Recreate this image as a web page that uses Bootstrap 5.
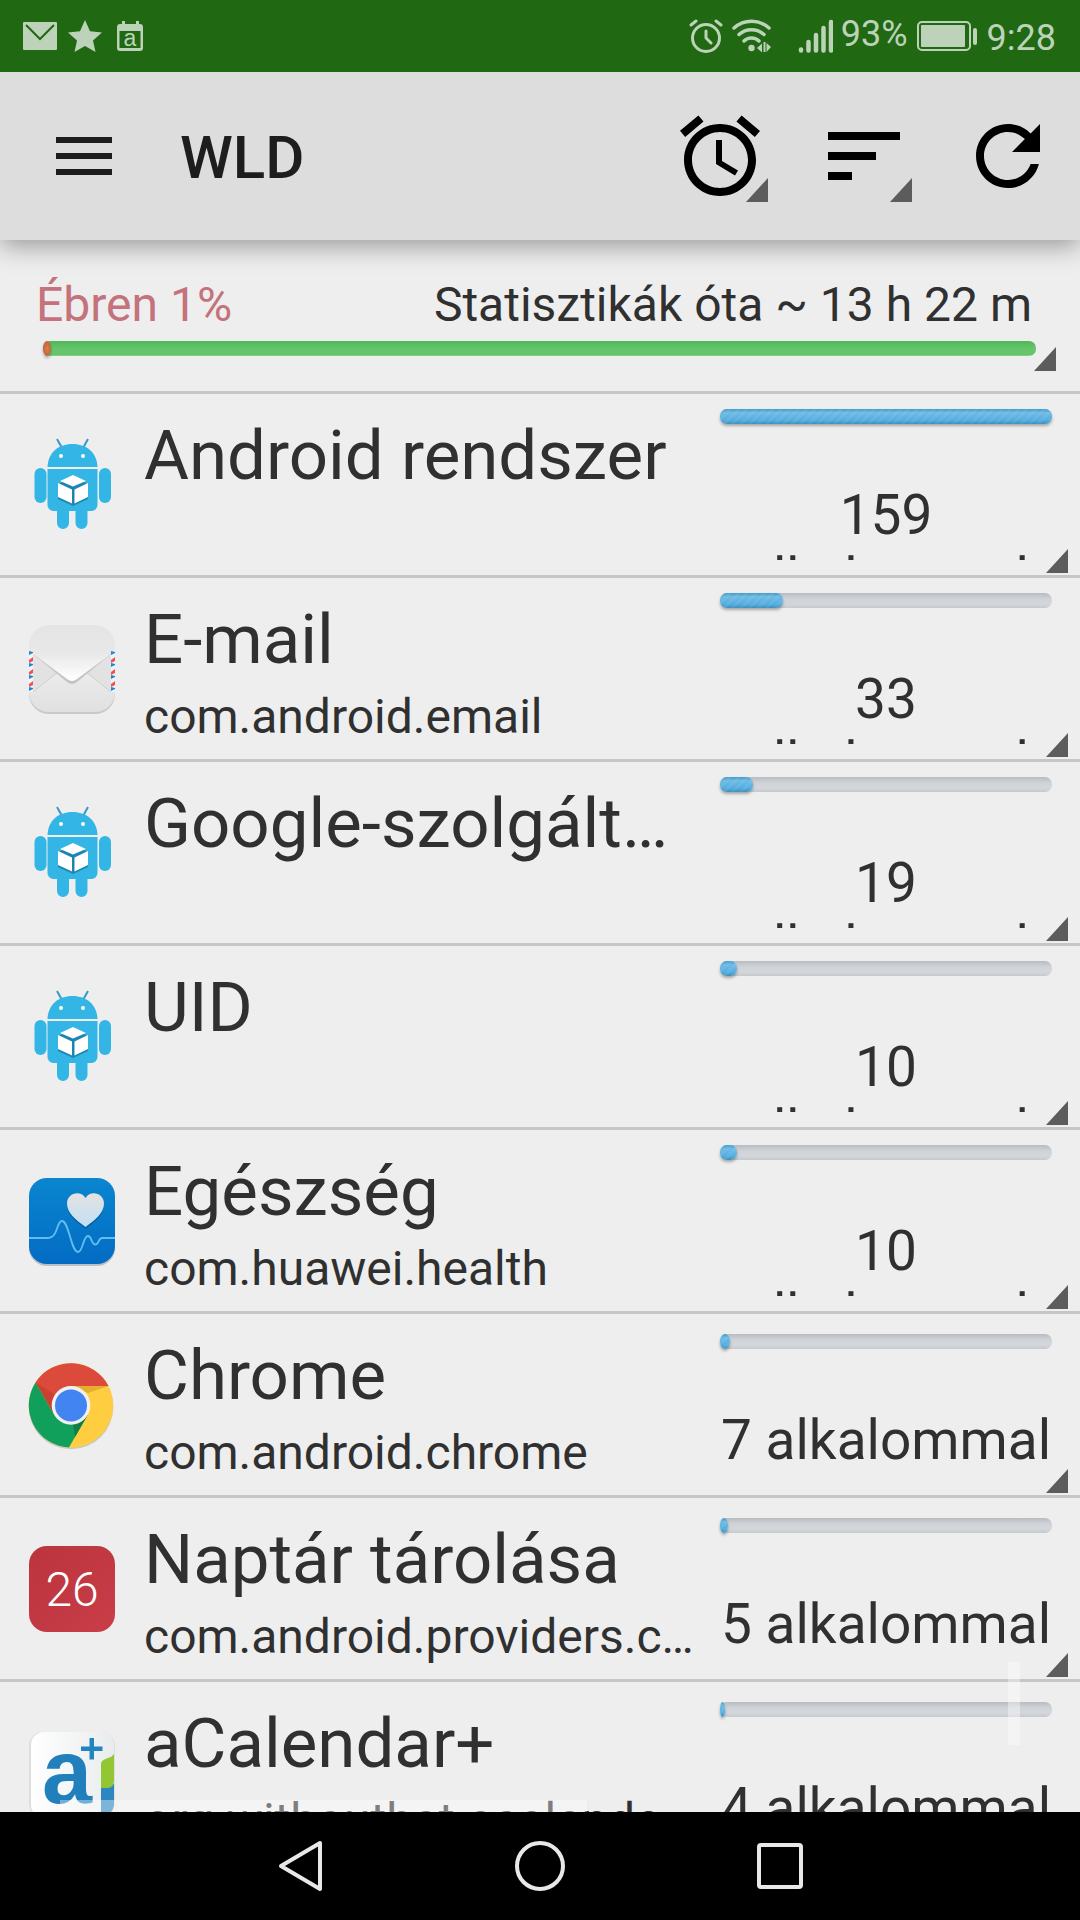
<!DOCTYPE html>
<html lang="hu">
<head>
<meta charset="utf-8">
<meta name="viewport" content="width=device-width, initial-scale=1">
<title>WLD</title>
<link href="https://cdn.jsdelivr.net/npm/bootstrap@5.3.0/dist/css/bootstrap.min.css" rel="stylesheet">
<style>
  body { font-family: Roboto, "Noto Sans", sans-serif; color: #303030; background: #eee; }
  svg { display: block; flex: none; }
  .status-strip { height: 72px; padding: 0 24px 0 22px; background: #206811; color: #bcd2b9; font-size: 36px; line-height: 42px; z-index: 3; }
  .app-toolbar { height: 168px; background: #ddd; color: #000; box-shadow: 0 6px 24px rgba(0,0,0,.36); z-index: 2; }
  .app-toolbar h1 { padding-top: 4px; font-size: 60px; font-weight: 500; line-height: 72px; color: #1d1d1d; }
  .tool-btn { width: 144px; height: 168px; }
  .menu-btn { padding-left: 56px; width: 180px; }
  .corner { position: absolute; right: 12px; bottom: 2px; }
  .tool-btn .corner { right: 24px; bottom: 38px; }
  .summary { height: 154px; padding: 37px 48px 0 36px; border-bottom: 3px solid #c6c6c6; font-size: 48px; line-height: 56px; }
  .summary .corner { right: 24px; bottom: 20px; }
  .awake { color: #c4727b; }
  .meter, .meter-green { height: 15px; border-radius: 7px; overflow: visible; }
  .meter { background: linear-gradient(#b9bdc1, #d0d4d8 40%, #d3d7db 75%, #c6cacd); }
  .meter .progress-bar { border-radius: min(50%, 7px) / 7px; background: repeating-linear-gradient(135deg, rgba(255,255,255,.06) 0 3px, transparent 3px 6px), linear-gradient(#3f9cc9, #6fbbe3 25%, #55ade0 75%, #3b8fba); box-shadow: 0 2px 3px rgba(0,0,0,.3); }
  .meter-green { margin: 8px -4px 0 7px; background: linear-gradient(#50b856, #66c56c 50%, #66c56c 90%, #8fd494); }
  .meter-green .progress-bar { border-radius: 50%; background: radial-gradient(#e57a45, #a9603a); box-shadow: 0 2px 3px rgba(0,0,0,.3); }
  .list-group-flush > .app-row { height: 184px; padding: 0 28px 0 24px; border: 0; border-bottom: 3px solid #c6c6c6; background: none; color: inherit; gap: 24px; }
  .app-icon { width: 96px; height: 96px; }
  .app-title { font-size: 69px; line-height: 80px; }
  .app-pkg { margin-top: 9px; font-size: 48px; line-height: 56px; }
  .app-names { padding-top: 22px; }
  .app-usage { width: 332px; flex: none; padding-top: 20px; font-size: 55px; line-height: 63px; }
  .app-usage.wrapped { padding-top: 15px; }
  .usage-text { margin-top: 60px; height: 76px; overflow: hidden; }
  .thumb-v, .thumb-h { position: absolute; background: rgba(255,255,255,.38); }
  .thumb-v { right: 60px; bottom: 67px; width: 12px; height: 83px; }
  .thumb-h { left: 60px; bottom: 0; width: 527px; height: 12px; }
  .nav-keys { height: 108px; }
  .nav-keys .btn { width: 240px; }
</style>
<script src="https://cdn.jsdelivr.net/npm/bootstrap@5.3.0/dist/js/bootstrap.bundle.min.js"></script>
</head>
<body>
<svg width="0" height="0" class="position-absolute" aria-hidden="true">
  <defs>
    <symbol id="i-corner" viewBox="0 0 22 24"><path d="M22 0v24H0z" fill="#5c5c5c"/></symbol>
    <symbol id="i-android" viewBox="0 0 96 96">
      <path d="M33 2l5 9M64 2l-5 9" stroke="#2f9dc4" stroke-width="2"/>
      <path d="M23.500 30C24 16 34 7 48.500 7S73 16 73.500 30z" fill="#33b5e5"/>
      <path d="M23.500 32h50v36a6 6 0 0 1-6 6h-4v12a6 6 0 0 1-12 0V74H45v12a6 6 0 0 1-12 0V74h-3.500a6 6 0 0 1-6-6z" fill="#33b5e5"/>
      <rect x="10.500" y="31" width="12" height="35" rx="6" fill="#33b5e5"/>
      <rect x="75" y="31" width="12" height="35" rx="6" fill="#33b5e5"/>
      <circle cx="37" cy="19" r="2" fill="#fff"/><circle cx="59" cy="19" r="2" fill="#fff"/>
      <path d="M34 47l15-7 15 7v15l-15 7-15-7z" fill="#1c86b0"/>
      <path d="M49 38l13 6-13 5.500-13-5.500zM34 46l14 6.500v14L34 60zM64 46l-13.500 6.500v14L64 60z" fill="#fff"/>
    </symbol>
    <linearGradient id="g-mail" x2="0" y2="1"><stop stop-color="#e4e4e4"/><stop offset=".5" stop-color="#e8e8e8"/><stop offset="1" stop-color="#fff"/></linearGradient>
    <linearGradient id="g-mail2" x2="0" y2="1"><stop stop-color="#fafafa"/><stop offset="1" stop-color="#e0e0e0"/></linearGradient>
    <linearGradient id="g-health" x2="0" y2="1"><stop stop-color="#0a86cf"/><stop offset="1" stop-color="#036bc4"/></linearGradient>
    <linearGradient id="g-heart" x2="0" y2="1"><stop stop-color="#e4e2e2"/><stop offset="1" stop-color="#c0e0f6"/></linearGradient>
    <linearGradient id="g-red" x2="1" y2="1"><stop stop-color="#bb343e"/><stop offset="1" stop-color="#c93d47"/></linearGradient>
    <linearGradient id="g-card" x2="1"><stop stop-color="#fff"/><stop offset="1" stop-color="#e9eced"/></linearGradient>
    <pattern id="p-air" width="82" height="12" patternUnits="userSpaceOnUse" x="5" y="30"><path d="M0 0h82v12H0z" fill="#f4f4f4"/><path d="M0 0l4 1v1l-4 2z" fill="#1a86dc"/><path d="M0 9l4-3v4l-4 2z" fill="#ee5350"/></pattern>
  </defs>
</svg>

<div class="d-flex flex-column vh-100 overflow-hidden">
  <header class="status-strip d-flex align-items-center flex-shrink-0 position-relative">
    <svg width="36" height="30" viewBox="0 0 36 30" fill="#bcd2b9" aria-hidden="true"><rect x="1" y="1" width="34" height="28" rx="1"/><path d="M4 4l14 14L32 4" fill="none" stroke="#206811" stroke-width="2"/></svg>
    <svg class="ms-2 me-2" width="38" height="32" viewBox="0 0 38 32" fill="#bcd2b9" aria-hidden="true"><path d="M19 0l5 11.200 12 1.200-9 8 2.500 11.600L19 26 8.500 32 11 20.400l-9-8 12-1.200z"/></svg>
    <svg width="38" height="30" viewBox="0 0 38 30" aria-hidden="true"><path d="M10 0h3v3h11V0h3v3h1a3 3 0 0 1 3 3v21a3 3 0 0 1-3 3H8a3 3 0 0 1-3-3V6a3 3 0 0 1 3-3h2z" fill="#bcd2b9"/><path d="M7.500 10h21v17h-21z" fill="#206811"/><text x="18" y="25" text-anchor="middle" font-family="Liberation Sans, sans-serif" font-size="23" fill="#bcd2b9">a</text></svg>
    <div class="ms-auto d-flex align-items-center">
      <svg width="34" height="34" viewBox="0 0 34 34" fill="none" stroke="#bcd2b9" stroke-width="3" stroke-linecap="round" aria-hidden="true"><circle cx="17" cy="19" r="13.500"/><path d="M17 12v7l5 5M2 6l5-4M32 6l-5-4" /></svg>
      <svg class="ms-2" width="42" height="34" viewBox="0 0 42 34" fill="none" stroke="#bcd2b9" stroke-width="3.500" stroke-linecap="round" aria-hidden="true"><path d="M3 9c10-9 25-9 35 0M8 15.500c7-6.500 18-6.500 25 0M13 22c4-4 11-4 15 0"/><circle cx="20.500" cy="29" r="3.200" fill="#bcd2b9" stroke="none"/><path d="M26 29l5-4.500v9zM32.500 23h2v10h-2zM40 28l-4.500-4v9z" fill="#bcd2b9" stroke="none"/></svg>
      <svg class="ms-4" width="36" height="34" viewBox="0 0 36 34" stroke="#bcd2b9" stroke-width="4.500" stroke-linecap="round" aria-hidden="true"><path d="M4 30.500v1M11.500 23v8.500M19 16v15.500M26.500 9v22.500M34 3v28.500"/></svg>
      <span class="ms-2 pb-1">93%</span>
      <svg class="ms-2" width="63" height="32" viewBox="0 0 63 32" aria-hidden="true"><rect x="2" y="2" width="52" height="28" rx="4" fill="none" stroke="#bcd2b9" stroke-width="2"/><rect x="5" y="5" width="44" height="22" rx="1" fill="#bcd2b9"/><rect x="57" y="8" width="4" height="17" rx="2" fill="#bcd2b9"/></svg>
      <span class="ms-2 pt-1">9:28</span>
    </div>
  </header>

  <nav class="app-toolbar d-flex align-items-center flex-shrink-0 position-relative">
    <button type="button" class="btn border-0 rounded-0 tool-btn menu-btn py-0" aria-label="Menü"><svg width="56" height="38" viewBox="0 0 56 38" fill="#1d1d1d"><path d="M0 0h56v6H0zM0 16h56v6H0zM0 32h56v6H0z"/></svg></button>
    <h1 class="m-0">WLD</h1>
    <div class="ms-auto d-flex">
      <button type="button" class="btn border-0 p-0 tool-btn position-relative d-flex align-items-center justify-content-center" aria-label="Ébresztések"><svg width="96" height="96" viewBox="0 0 24 24"><path d="M22 5.720l-4.600-3.860-1.290 1.530 4.600 3.860L22 5.720zM7.880 3.390L6.600 1.860 2 5.710l1.290 1.530 4.590-3.850zM12.500 8H11v6l4.750 2.850.75-1.230-4-2.370V8zM12 4c-4.970 0-9 4.030-9 9s4.020 9 9 9c4.970 0 9-4.030 9-9s-4.030-9-9-9zm0 16c-3.870 0-7-3.130-7-7s3.130-7 7-7 7 3.130 7 7-3.130 7-7 7z"/></svg><svg class="corner" width="22" height="24"><use href="#i-corner"/></svg></button>
      <button type="button" class="btn border-0 p-0 tool-btn position-relative d-flex align-items-center justify-content-center" aria-label="Rendezés"><svg width="96" height="96" viewBox="0 0 24 24"><path d="M3 18h6v-2H3v2zM3 6v2h18V6H3zm0 7h12v-2H3v2z"/></svg><svg class="corner" width="22" height="24"><use href="#i-corner"/></svg></button>
      <button type="button" class="btn border-0 p-0 tool-btn d-flex align-items-center justify-content-center" aria-label="Frissítés"><svg width="96" height="96" viewBox="0 0 24 24"><path d="M17.650 6.350C16.200 4.900 14.210 4 12 4c-4.420 0-7.990 3.580-7.990 8s3.570 8 7.990 8c3.730 0 6.840-2.550 7.730-6h-2.080c-.82 2.330-3.040 4-5.650 4-3.310 0-6-2.690-6-6s2.690-6 6-6c1.660 0 3.140.69 4.220 1.780L13 11h7V4l-2.350 2.350z"/></svg></button>
    </div>
  </nav>

  <section class="summary position-relative flex-shrink-0">
    <div class="d-flex justify-content-between"><span class="awake">Ébren 1%</span><span>Statisztikák óta ~ 13 h 22 m</span></div>
    <div class="progress meter-green" role="progressbar" aria-label="Ébren" aria-valuenow="1" aria-valuemin="0" aria-valuemax="100"><div class="progress-bar" style="width:.8%"></div></div>
    <svg class="corner" width="22" height="24"><use href="#i-corner"/></svg>
  </section>

  <main class="flex-grow-1 overflow-hidden position-relative">
    <ul class="list-group list-group-flush">
      <li class="list-group-item app-row d-flex">
        <svg class="app-icon align-self-center" viewBox="0 0 96 96"><use href="#i-android"/></svg>
        <div class="app-names flex-grow-1 overflow-hidden"><div class="app-title text-truncate">Android rendszer</div></div>
        <div class="app-usage wrapped"><div class="progress meter"><div class="progress-bar" style="width:100%"></div></div><div class="usage-text text-center">159 alkalommal</div></div>
        <svg class="corner" width="22" height="24"><use href="#i-corner"/></svg>
      </li>
      <li class="list-group-item app-row d-flex">
        <svg class="app-icon align-self-center" viewBox="0 0 96 96">
          <rect x="5" y="5" width="86" height="88" rx="20" fill="#c9c9c9"/><rect x="5" y="4" width="86" height="87" rx="20" fill="url(#g-mail2)"/>
          <path d="M5 31l4 0 25 20L9 71H5zM91 31h-4L62 51l25 20h4z" fill="#e2e2e2"/>
          <path d="M9 71l25-20M87 71L62 51" stroke="#cfcfcf"/>
          <path d="M9 33l34 28q5 4 10 0l34-28z" fill="#c4c4c4"/>
          <path d="M5 30V24A20 20 0 0 1 25 4h46a20 20 0 0 1 20 20v6l-38 28q-5 4-10 0z" fill="url(#g-mail)"/>
          <path d="M5 30h4v41H5zM87 30h4v41h-4z" fill="url(#p-air)"/>
        </svg>
        <div class="app-names flex-grow-1 overflow-hidden"><div class="app-title text-truncate">E-mail</div><div class="app-pkg text-truncate">com.android.email</div></div>
        <div class="app-usage wrapped"><div class="progress meter"><div class="progress-bar" style="width:19%"></div></div><div class="usage-text text-center">33 alkalommal</div></div>
        <svg class="corner" width="22" height="24"><use href="#i-corner"/></svg>
      </li>
      <li class="list-group-item app-row d-flex">
        <svg class="app-icon align-self-center" viewBox="0 0 96 96"><use href="#i-android"/></svg>
        <div class="app-names flex-grow-1 overflow-hidden"><div class="app-title text-truncate">Google-szolgáltatások</div></div>
        <div class="app-usage wrapped"><div class="progress meter"><div class="progress-bar" style="width:10%"></div></div><div class="usage-text text-center">19 alkalommal</div></div>
        <svg class="corner" width="22" height="24"><use href="#i-corner"/></svg>
      </li>
      <li class="list-group-item app-row d-flex">
        <svg class="app-icon align-self-center" viewBox="0 0 96 96"><use href="#i-android"/></svg>
        <div class="app-names flex-grow-1 overflow-hidden"><div class="app-title text-truncate">UID</div></div>
        <div class="app-usage wrapped"><div class="progress meter"><div class="progress-bar" style="width:5%"></div></div><div class="usage-text text-center">10 alkalommal</div></div>
        <svg class="corner" width="22" height="24"><use href="#i-corner"/></svg>
      </li>
      <li class="list-group-item app-row d-flex">
        <svg class="app-icon align-self-center" viewBox="0 0 96 96">
          <rect x="5" y="6" width="86" height="87" rx="18" fill="#b9c0c6"/><rect x="5" y="5" width="86" height="86" rx="18" fill="url(#g-health)"/>
          <path d="M5 65h18c12 0 9-17 15-17 7 0 9 31 16 31 5 0 5-16 10-16 4 0 3 8.500 7.500 8.500 4 0 2-6.500 7-6.500H91" fill="none" stroke="#5fc0f0" stroke-width="1.800"/>
          <path d="M61.500 56C52 49 43 42 43 32c0-10 13-14 18.500-5C67 18 80 22 80 32c0 10-9 17-18.500 24z" fill="#0663a8"/>
          <path d="M61.500 54C52 47 43 40 43 30.500c0-10 13-14 18.500-5.500C67 16.500 80 20.500 80 30.500 80 40 71 47 61.500 54z" fill="url(#g-heart)"/>
        </svg>
        <div class="app-names flex-grow-1 overflow-hidden"><div class="app-title text-truncate">Egészség</div><div class="app-pkg text-truncate">com.huawei.health</div></div>
        <div class="app-usage wrapped"><div class="progress meter"><div class="progress-bar" style="width:5%"></div></div><div class="usage-text text-center">10 alkalommal</div></div>
        <svg class="corner" width="22" height="24"><use href="#i-corner"/></svg>
      </li>
      <li class="list-group-item app-row d-flex">
        <svg class="app-icon align-self-center" viewBox="0 0 96 96">
          <circle cx="47" cy="50" r="42.300" fill="#c8c8c8"/><circle cx="47" cy="48.400" r="42.300" fill="#ffcd40"/>
          <path d="M47 29.100h37.600L64 36z" fill="#e5ae2c"/>
          <path d="M11.500 25.500A42.300 42.300 0 0 1 84.600 29.100H47L30.300 58z" fill="#db4a3b"/>
          <path d="M11.500 25.500L30.300 58h33.400L44.900 90.600A42.300 42.300 0 0 1 11.500 25.500z" fill="#11a05c"/>
          <path d="M49 67l14.700-9L51 80z" fill="#0d8048"/><path d="M11.500 25.500L30.300 58l1-20z" fill="#b93529" opacity=".5"/>
          <circle cx="47" cy="48.400" r="19.300" fill="#f1f1f1"/><circle cx="47" cy="48.400" r="16" fill="#4384f3"/>
        </svg>
        <div class="app-names flex-grow-1 overflow-hidden"><div class="app-title text-truncate">Chrome</div><div class="app-pkg text-truncate">com.android.chrome</div></div>
        <div class="app-usage"><div class="progress meter"><div class="progress-bar" style="width:3%"></div></div><div class="usage-text text-center">7 alkalommal</div></div>
        <svg class="corner" width="22" height="24"><use href="#i-corner"/></svg>
      </li>
      <li class="list-group-item app-row d-flex">
        <svg class="app-icon align-self-center" viewBox="0 0 96 96"><rect x="5" y="5" width="86" height="86" rx="18" fill="url(#g-red)"/><text x="48" y="65" text-anchor="middle" font-family="Roboto, sans-serif" font-weight="300" font-size="48" fill="#fff">26</text></svg>
        <div class="app-names flex-grow-1 overflow-hidden"><div class="app-title text-truncate">Naptár tárolása</div><div class="app-pkg text-truncate">com.android.providers.calendar</div></div>
        <div class="app-usage"><div class="progress meter"><div class="progress-bar" style="width:2.400%"></div></div><div class="usage-text text-center">5 alkalommal</div></div>
        <svg class="corner" width="22" height="24"><use href="#i-corner"/></svg>
      </li>
      <li class="list-group-item app-row d-flex">
        <svg class="app-icon align-self-center" viewBox="0 0 96 96">
          <rect x="5" y="6" width="86" height="86" rx="14" fill="#dcdfe0"/><rect x="7" y="6" width="83" height="86" rx="13" fill="url(#g-card)"/>
          <path d="M77 58h13v20q0 10-13 13z" fill="#2e86c1"/><path d="M77 38q0-4 7-6 4-1 6-4v27q0 6-6 7h-7z" fill="#92c632"/>
          <text x="43" y="77" text-anchor="middle" font-family="Liberation Sans, sans-serif" font-weight="700" font-size="90" fill="#2180bb">a</text>
          <path d="M57 20.500h8.500V12H70v8.500h8.500V25H70v8.500h-4.500V25H57z" fill="#2385c0"/>
        </svg>
        <div class="app-names flex-grow-1 overflow-hidden"><div class="app-title text-truncate">aCalendar+</div><div class="app-pkg text-truncate">org.withouthat.acalendarplus</div></div>
        <div class="app-usage"><div class="progress meter"><div class="progress-bar" style="width:1.500%"></div></div><div class="usage-text text-center">4 alkalommal</div></div>
        <svg class="corner" width="22" height="24"><use href="#i-corner"/></svg>
      </li>
    </ul>
    <div class="thumb-v"></div>
    <div class="thumb-h"></div>
  </main>

  <footer class="nav-keys bg-black d-flex justify-content-center flex-shrink-0">
    <button type="button" class="btn border-0 p-0 d-flex align-items-center justify-content-center" aria-label="Vissza"><svg width="46" height="52" viewBox="0 0 46 52" fill="none" stroke="#e8e8e8" stroke-width="4" stroke-linejoin="round"><path d="M43 3v46L4 26z"/></svg></button>
    <button type="button" class="btn border-0 p-0 d-flex align-items-center justify-content-center" aria-label="Kezdőlap"><svg width="52" height="52" viewBox="0 0 52 52" fill="none" stroke="#e8e8e8" stroke-width="4"><circle cx="26" cy="26" r="23"/></svg></button>
    <button type="button" class="btn border-0 p-0 d-flex align-items-center justify-content-center" aria-label="Áttekintés"><svg width="46" height="46" viewBox="0 0 46 46" fill="none" stroke="#e8e8e8" stroke-width="4"><rect x="2" y="2" width="42" height="42" rx="2"/></svg></button>
  </footer>
</div>
</body>
</html>
